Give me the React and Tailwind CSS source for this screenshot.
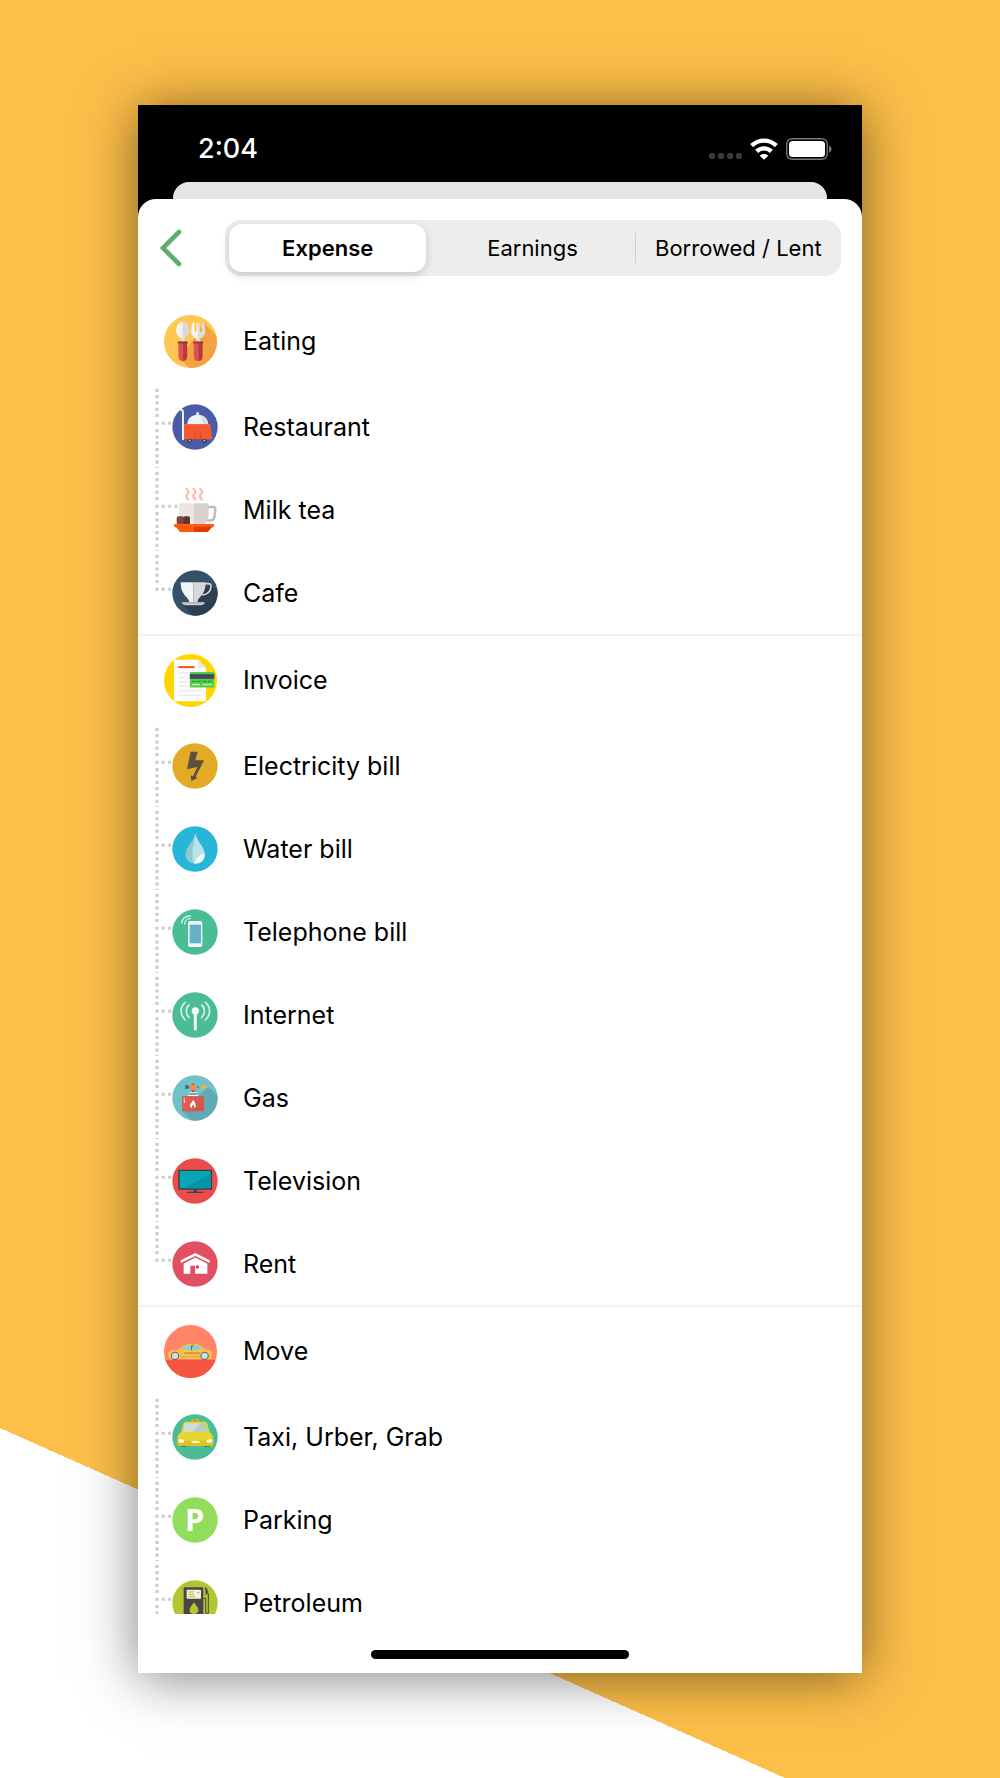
import { useState } from "react";
import clsx from "clsx";

const tabs = ["Expense", "Earnings", "Borrowed / Lent"];

function EatingIcon() {
  return (
    <svg viewBox="0 0 158 158" className="size-[53px] shrink-0" aria-hidden="true">
      <clipPath id="eating-clip">
        <circle cx="79" cy="79" r="79" />
      </clipPath>
      <g clipPath="url(#eating-clip)">
        <rect width="158" height="158" fill="#ffc652" />
        <path d="M120 25 L158 63 V158 H78 L46 132 Z" fill="#f4a241" />
      </g>
      <rect x="50" y="62" width="12" height="20" fill="#dcdcdc" />
      <path d="M56 20 C44 20 36 33 36 47 C36 60 45 69 56 69 Z" fill="#f3f3f3" />
      <path d="M56 20 C68 20 76 33 76 47 C76 60 67 69 56 69 Z" fill="#d9d9d9" />
      <path d="M43 80 H56 V137 C48 137 43 132 43 125 Z" fill="#df5152" />
      <path d="M56 80 H69 V125 C69 132 64 137 56 137 Z" fill="#b33b40" />
      <rect x="41" y="79" width="30" height="6" rx="2" fill="#a63237" />
      <rect x="96" y="62" width="12" height="20" fill="#dcdcdc" />
      <path d="M102 22 C99 22 97 23 97 26 V46 Q97 50 94 50 Q91 50 91 46 V25 C91 20 86 20 85 25 C82 34 81 42 81 49 C81 62 91 71 102 71 Z" fill="#f3f3f3" />
      <path d="M102 22 C105 22 107 23 107 26 V46 Q107 50 110 50 Q113 50 113 46 V25 C113 20 118 20 119 25 C122 34 123 42 123 49 C123 62 113 71 102 71 Z" fill="#dedede" />
      <path d="M89 80 H102 V137 C94 137 89 132 89 125 Z" fill="#df5152" />
      <path d="M102 80 H115 V125 C115 132 110 137 102 137 Z" fill="#b33b40" />
      <rect x="87" y="79" width="30" height="6" rx="2" fill="#a63237" />
    </svg>
  );
}

function RestaurantIcon() {
  return (
    <svg viewBox="0 0 138 138" className="size-[46px] shrink-0" aria-hidden="true">
      <circle cx="69" cy="69" r="68" fill="#4b5ba7" />
      <path d="M13 14 L28 17 Q33 18 33 24 V106" fill="none" stroke="#eef1f6" strokeWidth="6" strokeLinecap="round" />
      <circle cx="77" cy="29" r="5" fill="#dfe5ec" />
      <path d="M46 60 C46 43 60 32 77 32 C94 32 108 43 108 60 Z" fill="#eef2f5" />
      <path d="M77 32 C94 32 108 43 108 60 H92 C92 46 86 36 77 32 Z" fill="#d9e0e7" />
      <circle cx="53" cy="110" r="7" fill="#333b46" />
      <circle cx="53" cy="110" r="3" fill="#aab2bb" />
      <circle cx="97" cy="110" r="7" fill="#333b46" />
      <circle cx="97" cy="110" r="3" fill="#aab2bb" />
      <path d="M36 60 H115 L121 106 H36 Z" fill="#f4592f" />
      <path d="M74 72 L64 106 H71 Z M82 72 L84 106 H91 Z" fill="#dd4d27" />
      <path d="M36 60 H115 V64 H36 Z" fill="#f8663a" />
    </svg>
  );
}

function MilkTeaIcon() {
  return (
    <svg viewBox="0 0 138 138" className="size-[46px] shrink-0" aria-hidden="true">
      <g fill="none" stroke="#ffc0ad" strokeWidth="7" strokeLinecap="round">
        <path d="M43 5 C53 12 50 16 45 22 C41 28 43 33 49 37" />
        <path d="M64 5 C74 12 71 16 66 22 C62 28 64 33 70 37" />
        <path d="M84 5 C94 12 91 16 86 22 C82 28 84 33 90 37" />
      </g>
      <path d="M107 60 H124 Q132 60 130 70 L127 91 Q125 100 117 100 H101" fill="none" stroke="#c8b5b0" strokeWidth="7" />
      <path d="M21 49 H66 V112 H34 C25 102 21 90 21 78 Z" fill="#ebe6e4" />
      <path d="M66 49 H110 V78 C110 90 106 102 98 112 H66 Z" fill="#dad2cf" />
      <rect x="14" y="88" width="22" height="24" rx="5" fill="#7c4a3c" />
      <rect x="34" y="88" width="20" height="24" rx="5" fill="#5f362b" />
      <path d="M7 112 H66 V135 H27 C20 135 18 121 7 119 Z" fill="#ff5a10" />
      <path d="M66 112 H125 V119 C114 121 112 135 105 135 H66 Z" fill="#e03c00" />
      <path d="M7 112 H125 V119 H7 Z" fill="#ff5a10" />
    </svg>
  );
}

function CafeIcon() {
  return (
    <svg viewBox="0 0 138 138" className="size-[46px] shrink-0" aria-hidden="true">
      <clipPath id="cafe-clip">
        <circle cx="69" cy="69" r="68" />
      </clipPath>
      <g clipPath="url(#cafe-clip)">
        <rect width="138" height="138" fill="#355167" />
        <path d="M117 42 L138 63 V138 H64 L32 106 Z" fill="#2d3e50" />
      </g>
      <path d="M98 41 H108 Q119 41 117 51 C115 66 104 74 90 75" fill="none" stroke="#d5d9dc" strokeWidth="5" />
      <path d="M26 37 H64 V97 H52 C50 86 44 83 37 74 C29 64 26 51 26 37 Z" fill="#f3f4f4" />
      <path d="M64 37 H101 C101 52 98 64 90 74 C83 83 78 86 76 97 H64 Z" fill="#d5d9dc" />
      <path d="M30 97 H98 C97 103 93 106 86 106 H42 C35 106 31 103 30 97 Z" fill="#c8cccf" />
      <path d="M30 97 H98 V100 H30 Z" fill="#aeb4b9" />
    </svg>
  );
}

function InvoiceIcon() {
  return (
    <svg viewBox="0 0 158 158" className="size-[53px] shrink-0" aria-hidden="true">
      <circle cx="79" cy="79" r="79" fill="#ffd600" />
      <path d="M30 17 H102 L125 41 V141 H30 Z" fill="#fdfdfe" />
      <path d="M102 17 L125 41 H102 Z" fill="#e2e9ef" />
      <rect x="43" y="36" width="48" height="6" fill="#f4511e" />
      <path d="M43 57 H71 M43 70 H71 M43 83 H71 M43 96 H71 M43 109 H111 M43 123 H111" stroke="#e9edf2" strokeWidth="5" />
      <rect x="77" y="54" width="73" height="46" rx="3" fill="#55cd48" />
      <rect x="77" y="60" width="73" height="14" fill="#434a5c" />
      <path d="M83 82 H145" stroke="#2f9e35" strokeWidth="5" strokeDasharray="12 4" />
      <path d="M83 91 H107 M115 91 H143" stroke="#b9f2b0" strokeWidth="4" />
    </svg>
  );
}

function ElectricityIcon() {
  return (
    <svg viewBox="0 0 138 138" className="size-[46px] shrink-0" aria-hidden="true">
      <circle cx="69" cy="69" r="68" fill="#e3ab25" />
      <path d="M56 26 H77 L70 52 L96 52 L71 101 L76 105 L58 114 L56 97 L63 100 L76 72 L45 79 Z" fill="#5c5041" />
    </svg>
  );
}

function WaterIcon() {
  return (
    <svg viewBox="0 0 138 138" className="size-[46px] shrink-0" aria-hidden="true">
      <circle cx="69" cy="69" r="68" fill="#27b6d7" />
      <path d="M70 22 C66 46 41 62 41 86 C41 102 53 113 70 113 Z" fill="#92c6ce" />
      <path d="M70 22 C74 46 98 62 98 86 C98 102 86 113 70 113 H66 C60 100 62 90 62 72 Z" fill="#b9e3ea" />
      <path d="M97 82 C101 100 86 115 68 111 C70 98 82 87 97 82 Z" fill="#f4fbfc" />
    </svg>
  );
}

function TelephoneIcon() {
  return (
    <svg viewBox="0 0 138 138" className="size-[46px] shrink-0" aria-hidden="true">
      <circle cx="69" cy="69" r="68" fill="#4bbd96" />
      <g fill="none" stroke="#d9f1e8" strokeWidth="4" strokeLinecap="round">
        <path d="M29 42 C30 29 41 20 55 21" />
        <path d="M38 45 C38 36 45 29 55 29" />
      </g>
      <rect x="48" y="36" width="43" height="78" rx="6" fill="#f3f6f6" />
      <rect x="53" y="47" width="34" height="56" fill="#62b3ca" />
      <path d="M64 42 H76" stroke="#c9d3d3" strokeWidth="2" />
    </svg>
  );
}

function InternetIcon() {
  return (
    <svg viewBox="0 0 138 138" className="size-[46px] shrink-0" aria-hidden="true">
      <circle cx="69" cy="69" r="68" fill="#4bbd96" />
      <circle cx="70" cy="57" r="11" fill="#f3f6f6" />
      <path d="M70 60 V111" stroke="#f3f6f6" strokeWidth="9" strokeLinecap="round" />
      <g fill="none" stroke="#d6f0e6" strokeWidth="5" strokeLinecap="round">
        <path d="M51 39 C40 48 40 66 51 76" />
        <path d="M89 39 C100 48 100 66 89 76" />
        <path d="M40 31 C23 45 23 69 40 84" />
        <path d="M100 31 C117 45 117 69 100 84" />
      </g>
    </svg>
  );
}

function GasIcon() {
  return (
    <svg viewBox="0 0 138 138" className="size-[46px] shrink-0" aria-hidden="true">
      <clipPath id="gas-clip">
        <circle cx="69" cy="69" r="68" />
      </clipPath>
      <g clipPath="url(#gas-clip)">
        <rect width="138" height="138" fill="#70c1c9" />
        <path d="M109 36 L138 65 V138 H60 L31 109 Z" fill="#60aab2" />
      </g>
      <rect x="59" y="26" width="9" height="28" fill="#d5544a" />
      <path d="M40 29 L52 33 V39 L40 43 Z" fill="#1d6f94" />
      <ellipse cx="63" cy="37" rx="12" ry="7" fill="#f0903a" />
      <path d="M76 33 L84 36 L76 40 Z" fill="#2d86a8" />
      <path d="M84 28 L112 36 L84 44 L90 36 Z" fill="#f0ae45" />
      <path d="M50 52 H76 L79 64 H47 Z" fill="#f5f6f6" />
      <path d="M49 57 H77" stroke="#2d86a8" strokeWidth="4" />
      <rect x="30" y="64" width="66" height="45" rx="3" fill="#d7554b" />
      <path d="M30 67 Q30 64 33 64 H63 V109 H33 Q30 109 30 106 Z" fill="#dc5d52" />
      <path d="M37 69 V84" stroke="#f9dad7" strokeWidth="4" strokeDasharray="4 2 10" />
      <path d="M64 73 C66 82 73 86 71 94 C70 98 68 99 66 99 C67 94 66 91 63 89 C60 92 59 95 60 99 C55 98 53 93 55 88 C57 83 63 80 64 73 Z" fill="#fff" />
    </svg>
  );
}

function TelevisionIcon() {
  return (
    <svg viewBox="0 0 138 138" className="size-[46px] shrink-0" aria-hidden="true">
      <circle cx="69" cy="69" r="68" fill="#eb4b4b" />
      <rect x="19" y="35" width="101" height="60" rx="2" fill="#2c3e4a" />
      <rect x="23" y="39" width="93" height="52" fill="#0aa5b4" />
      <path d="M116 46 V91 H37 Z" fill="#0692ab" />
      <path d="M65 95 H75 V101 H94 V105 H45 V101 H65 Z" fill="#3d4450" />
    </svg>
  );
}

function RentIcon() {
  return (
    <svg viewBox="0 0 138 138" className="size-[46px] shrink-0" aria-hidden="true">
      <circle cx="69" cy="69" r="68" fill="#e14f63" />
      <path d="M35 67 L70 49 L106 67 V98 H69 V74 H55 V98 H35 Z" fill="#fff" />
      <path d="M26 58 L70 36 L113 58 V66 L70 45 L26 66 Z" fill="#fff" />
      <path d="M28 69 L70 48 L111 69" fill="none" stroke="#e14f63" strokeWidth="3" />
      <circle cx="76" cy="78" r="5" fill="#e5323f" />
    </svg>
  );
}

function MoveIcon() {
  return (
    <svg viewBox="0 0 158 158" className="size-[53px] shrink-0" aria-hidden="true">
      <clipPath id="move-clip">
        <circle cx="79" cy="79" r="79" />
      </clipPath>
      <g clipPath="url(#move-clip)">
        <rect width="158" height="158" fill="#ff8468" />
        <rect y="104" width="158" height="54" fill="#f4563f" />
      </g>
      <path d="M13 80 C22 75 34 75 46 72 C57 60 68 56 84 56 C102 56 112 62 122 72 C134 74 141 76 143 82 V96 Q143 101 137 101 H20 Q13 101 13 95 Z" fill="#f8c24d" />
      <path d="M52 73 C60 63 69 60 80 60 V73 Z" fill="#7fd0e6" />
      <path d="M85 60 C98 60 106 63 115 73 H85 Z" fill="#7fd0e6" />
      <path d="M82 60 V76 M80 72 L88 58" stroke="#4a5a63" strokeWidth="2" />
      <path d="M61 84 H106" stroke="#9a8243" strokeWidth="4" strokeDasharray="7 1" />
      <path d="M15 95 H142" stroke="#e3a43b" strokeWidth="3" />
      <circle cx="33" cy="92" r="11" fill="#d5dade" stroke="#5b6670" strokeWidth="3" />
      <circle cx="121" cy="92" r="11" fill="#d5dade" stroke="#5b6670" strokeWidth="3" />
    </svg>
  );
}

function TaxiIcon() {
  return (
    <svg viewBox="0 0 138 138" className="size-[46px] shrink-0" aria-hidden="true">
      <circle cx="69" cy="69" r="68" fill="#4bbd96" />
      <rect x="58" y="15" width="23" height="12" rx="2" fill="#dcb72a" />
      <path d="M64 21 H75" stroke="#8b7a24" strokeWidth="3" />
      <path d="M27 94 H43 V98 H27 Z M97 94 H113 V98 H97 Z" fill="#3b6f62" />
      <path d="M42 23 H98 Q104 23 106 29 L113 55 Q124 62 124 76 V90 Q124 96 118 96 H22 Q16 96 16 90 V76 Q16 62 27 55 L34 29 Q36 23 42 23 Z" fill="#e6d62f" />
      <path d="M44 28 H96 Q101 28 102 32 L108 53 H33 L38 32 Q39 28 44 28 Z" fill="#cfdcdd" />
      <path d="M86 28 H96 Q101 28 102 32 L108 53 H62 Z" fill="#b7ceb6" />
      <path d="M16 76 Q70 86 124 76 V90 Q124 96 118 96 H22 Q16 96 16 90 Z" fill="#e0c022" />
      <ellipse cx="28" cy="81" rx="9" ry="5" fill="#fff" transform="rotate(12 28 81)" />
      <ellipse cx="112" cy="81" rx="9" ry="5" fill="#fff" transform="rotate(-12 112 81)" />
      <rect x="58" y="81" width="25" height="6" rx="2" fill="#fdf7c4" />
    </svg>
  );
}

function ParkingIcon() {
  return (
    <svg viewBox="0 0 138 138" className="size-[46px] shrink-0" aria-hidden="true">
      <circle cx="69" cy="69" r="68" fill="#90de5b" />
      <text x="68" y="103" textAnchor="middle" fontFamily="Open Sans, sans-serif" fontWeight="700" fontSize="92" fill="#fff">
        P
      </text>
    </svg>
  );
}

function PetroleumIcon() {
  return (
    <svg viewBox="0 0 138 138" className="size-[46px] shrink-0" aria-hidden="true">
      <circle cx="69" cy="69" r="68" fill="#b1c631" />
      <path d="M35 25 Q35 22 38 22 H91 Q94 22 94 25 V116 H35 Z" fill="#4c4446" />
      <rect x="44" y="29" width="43" height="27" rx="2" fill="#f1f2e6" />
      <path d="M49 36 H66 M49 43 H66 M49 50 H70 M75 38 H83" stroke="#b1c631" strokeWidth="3" />
      <path d="M66 67 C71 75 76 79 79 88 C81 96 75 102 66 102 C57 102 51 96 53 86 C55 79 62 75 66 67 Z" fill="#b1c631" />
      <path d="M94 55 H101 V100 H109 V42 L101 24" fill="none" stroke="#4c4446" strokeWidth="3" />
      <path d="M99 20 L106 28 V44 H101 Z" fill="#4c4446" />
    </svg>
  );
}

const groups = [
  {
    name: "Eating",
    Icon: EatingIcon,
    items: [
      { name: "Restaurant", Icon: RestaurantIcon },
      { name: "Milk tea", Icon: MilkTeaIcon },
      { name: "Cafe", Icon: CafeIcon },
    ],
  },
  {
    name: "Invoice",
    Icon: InvoiceIcon,
    items: [
      { name: "Electricity bill", Icon: ElectricityIcon },
      { name: "Water bill", Icon: WaterIcon },
      { name: "Telephone bill", Icon: TelephoneIcon },
      { name: "Internet", Icon: InternetIcon },
      { name: "Gas", Icon: GasIcon },
      { name: "Television", Icon: TelevisionIcon },
      { name: "Rent", Icon: RentIcon },
    ],
  },
  {
    name: "Move",
    Icon: MoveIcon,
    open: true,
    items: [
      { name: "Taxi, Urber, Grab", Icon: TaxiIcon },
      { name: "Parking", Icon: ParkingIcon },
      { name: "Petroleum", Icon: PetroleumIcon },
    ],
  },
];

// dotted branch that ties a sub category to its parent
function Branch({ last }) {
  return (
    <svg viewBox="0 0 16 83" className="h-[83px] w-4 shrink-0 overflow-visible" aria-hidden="true">
      <g stroke="#cfcfcf" fill="none">
        <path d="M2 3.8 V33" strokeWidth="3.4" strokeDasharray="3.1 3.2" />
        <path d="M0.3 38.3 H23" strokeWidth="3" strokeDasharray="3.3 3" />
        {!last && <path d="M2 44.1 V83" strokeWidth="3.4" strokeDasharray="3.1 3.2" />}
      </g>
    </svg>
  );
}

function StatusBar() {
  return (
    <div className="flex items-center justify-between pt-7 pb-[17px] pl-[60px] pr-[30px] text-white">
      <span className="text-[27px] leading-8 font-medium">2:04</span>
      <div className="flex items-center gap-2">
        <svg viewBox="0 0 33 22" className="h-[22px] w-[33px]" aria-hidden="true">
          <g fill="#3b3b3b">
            <rect x="0" y="15" width="6" height="6" rx="2" />
            <rect x="9" y="15" width="6" height="6" rx="2" />
            <rect x="18" y="15" width="6" height="6" rx="2" />
            <rect x="27" y="15" width="6" height="6" rx="2" />
          </g>
        </svg>
        <svg viewBox="0 0 82 66" className="h-[22px] w-7" aria-hidden="true">
          <g fill="none" stroke="#fff" strokeWidth="13">
            <path d="M4 23 C25 3 57 3 78 23" />
            <path d="M19 40 C32 28 50 28 63 40" />
          </g>
          <path d="M41 65 L28 53 C35 46 47 46 54 53 Z" fill="#fff" />
        </svg>
        <svg viewBox="0 0 46 22" className="h-[22px] w-[46px]" aria-hidden="true">
          <rect x="0.7" y="0.7" width="40.6" height="20.6" rx="5.5" fill="none" stroke="#777" strokeWidth="1.4" />
          <rect x="3" y="3" width="36" height="16" rx="3.5" fill="#fff" />
          <path d="M43 7.5 C46.5 8.5 46.5 13.5 43 14.5 Z" fill="#777" />
        </svg>
      </div>
    </div>
  );
}

export default function App() {
  const [tab, setTab] = useState("Expense");

  return (
    <main className="flex h-screen flex-col bg-[#fdbf49] bg-[linear-gradient(to_top_right,#ffffff_50%,transparent_50%)] bg-[size:78.5%_350px] bg-left-bottom bg-no-repeat px-[13.8%] py-[105px] font-[Inter,sans-serif] text-black">
      <div className="flex min-h-0 flex-1 flex-col bg-black shadow-[0_4px_52px_rgba(0,0,0,0.5)]">
        <StatusBar />
        <div className="mx-[35px] h-[17px] shrink-0 rounded-t-2xl bg-[#e5e5e5]" />

        <div className="flex min-h-0 flex-1 flex-col rounded-t-[18px] bg-white">
          <header className="flex items-center gap-[43px] px-[21px] py-[21px]">
            <button type="button" aria-label="Back" className="shrink-0">
              <svg viewBox="0 0 23 38" className="h-[38px] w-[23px]" aria-hidden="true">
                <path d="M20 3 L4 19 L20 35" fill="none" stroke="#60ae69" strokeWidth="4.6" strokeLinecap="round" />
              </svg>
            </button>
            <div className="grid h-14 flex-1 grid-cols-3 rounded-2xl bg-[#ededed]">
              {tabs.map((name, i) => (
                <div key={name} className="flex items-center">
                  <button
                    type="button"
                    aria-pressed={tab === name}
                    onClick={() => setTab(name)}
                    className={clsx(
                      "mx-1 h-12 flex-1 rounded-[13px] text-[22px] whitespace-nowrap",
                      tab === name && "bg-white font-semibold shadow-[0_3px_8px_rgba(0,0,0,0.16)]"
                    )}
                  >
                    {name}
                  </button>
                  {i === 1 && <span className="h-[30px] w-px bg-[#cfcfcf]" />}
                </div>
              ))}
            </div>
          </header>

          <ul className="min-h-0 flex-1 overflow-y-auto text-[25px] leading-6 [scrollbar-width:none]">
            {groups.map(({ name, Icon, items, open }) => (
              <li key={name} className={clsx(!open && "border-b-2 border-[#f2f2f7]")}>
                <button type="button" className="flex h-[88px] w-full items-center gap-[26px] pl-[26px] text-left">
                  <Icon />
                  {name}
                </button>
                <ul>
                  {items.map((item, i) => (
                    <li key={item.name}>
                      <button type="button" className="flex h-[83px] w-full items-center pl-[17px] text-left">
                        <Branch last={!open && i === items.length - 1} />
                        <span className="ml-px flex items-center gap-[25px]">
                          <item.Icon />
                          {item.name}
                        </span>
                      </button>
                    </li>
                  ))}
                </ul>
              </li>
            ))}
          </ul>

          <div className="flex justify-center pt-9 pb-[14px]">
            <div className="h-[9px] w-[258px] rounded-full bg-black" />
          </div>
        </div>
      </div>
    </main>
  );
}
